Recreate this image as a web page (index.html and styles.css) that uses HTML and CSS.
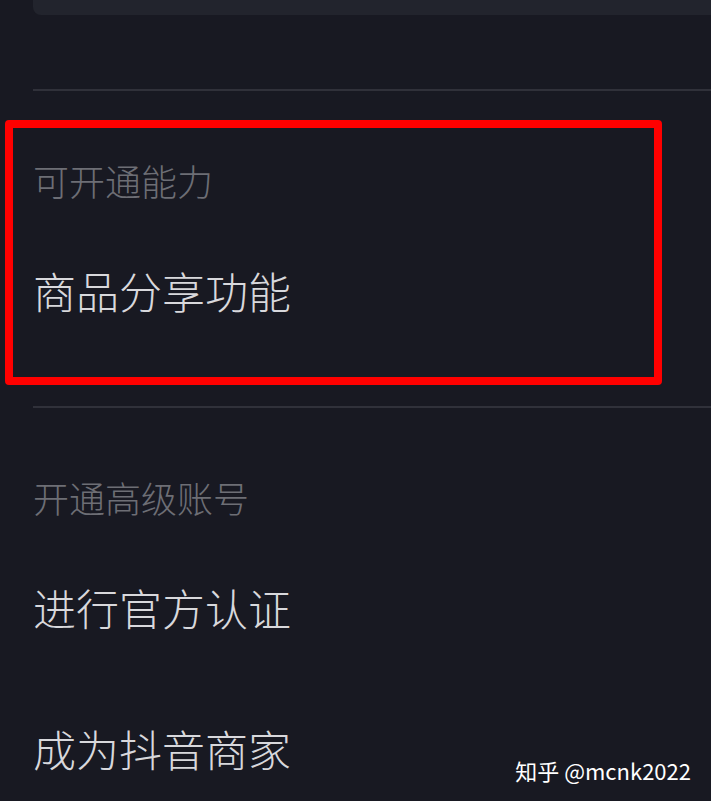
FILE: index.html
```html
<!DOCTYPE html>
<html>
<head>
    <title>开通能力</title>
    <link rel="stylesheet" href="styles.css">
</head>
<body>
    <div class="top-card"></div>

    <div class="group first">
        <div class="group-title">可开通能力</div>
        <div class="item">商品分享功能</div>
        <div class="highlight"></div>
    </div>

    <div class="group">
        <div class="group-title">开通高级账号</div>
        <div class="item">进行官方认证</div>
        <div class="item">成为抖音商家</div>
    </div>

    <div class="watermark">知乎 @mcnk2022</div>
</body>
</html>
```

FILE: styles.css
```css
body {
    margin: 0;
    height: 801px;
    overflow: hidden;
    position: relative;
    background-color: #181922;
    font-family: "Noto Sans CJK SC", "Noto Sans", sans-serif;
}
.top-card {
    margin-left: 33px;
    height: 15px;
    background-color: #22242d;
    border-bottom-left-radius: 8px;
}
.group {
    position: relative;
    margin-left: 33px;
    border-top: 2px solid #30313a;
    padding-top: 71px;
}
.group.first {
    margin-top: 74px;
    padding-bottom: 95px;
}
.group-title {
    font-size: 36px;
    line-height: 36px;
    font-weight: 300;
    color: #6d6e75;
}
.item {
    font-size: 43px;
    line-height: 42px;
    font-weight: 300;
    color: #d8d8dc;
    margin-top: 71px;
}
.item + .item {
    margin-top: 99px;
}
.highlight {
    position: absolute;
    left: -28px;
    top: 29px;
    width: 657px;
    height: 265px;
    box-sizing: border-box;
    border: 8px solid #ff0000;
    border-radius: 4px;
}
.watermark {
    position: absolute;
    right: 20px;
    bottom: 20px;
    font-size: 22px;
    line-height: 22px;
    color: #ffffff;
}
```
